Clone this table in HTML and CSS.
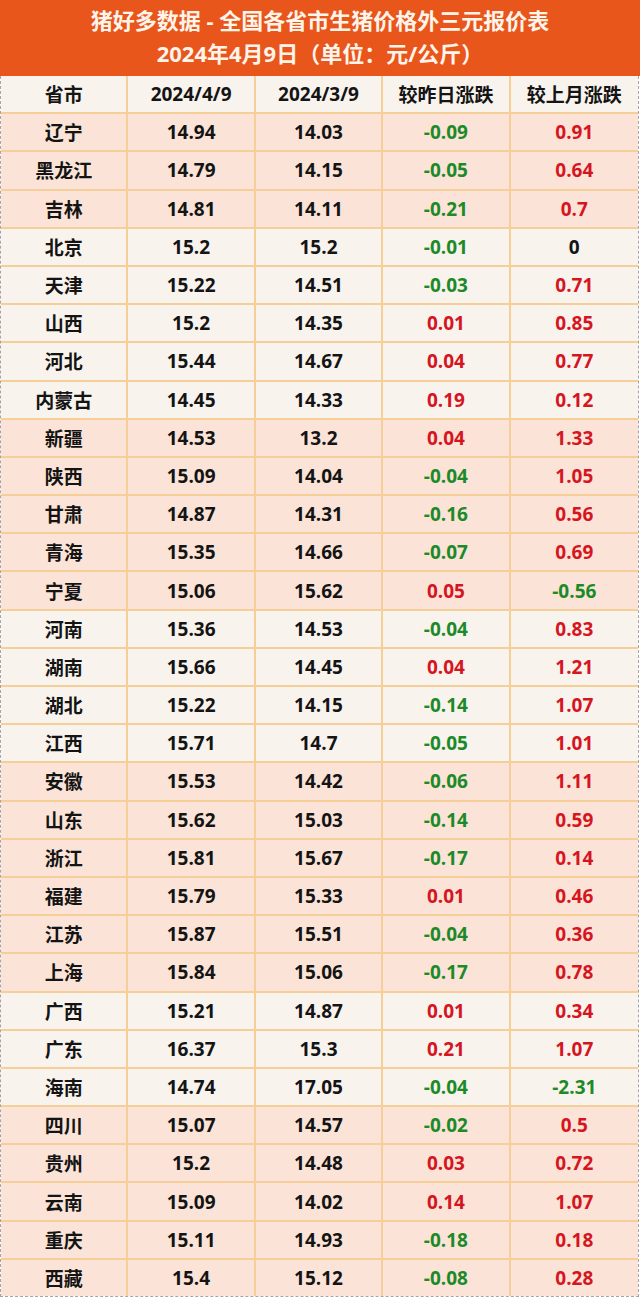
FILE: index.html
```html
<!DOCTYPE html>
<html lang="zh-CN">
<head>
<meta charset="utf-8">
<title>全国各省市生猪价格外三元报价表</title>
<link rel="stylesheet" href="styles.css">
</head>
<body>
<div class="page">
  <div class="title">
    <div>猪好多数据 - 全国各省市生猪价格外三元报价表</div>
    <div>2024年4月9日（单位：元/公斤）</div>
  </div>
  <div class="sheet">
    <div class="row light head"><div>省市</div><div>2024/4/9</div><div>2024/3/9</div><div>较昨日涨跌</div><div>较上月涨跌</div></div>
    <div class="row pink"><div>辽宁</div><div>14.94</div><div>14.03</div><div class="dn">-0.09</div><div class="up">0.91</div></div>
    <div class="row pink"><div>黑龙江</div><div>14.79</div><div>14.15</div><div class="dn">-0.05</div><div class="up">0.64</div></div>
    <div class="row pink"><div>吉林</div><div>14.81</div><div>14.11</div><div class="dn">-0.21</div><div class="up">0.7</div></div>
    <div class="row light"><div>北京</div><div>15.2</div><div>15.2</div><div class="dn">-0.01</div><div>0</div></div>
    <div class="row light"><div>天津</div><div>15.22</div><div>14.51</div><div class="dn">-0.03</div><div class="up">0.71</div></div>
    <div class="row light"><div>山西</div><div>15.2</div><div>14.35</div><div class="up">0.01</div><div class="up">0.85</div></div>
    <div class="row light"><div>河北</div><div>15.44</div><div>14.67</div><div class="up">0.04</div><div class="up">0.77</div></div>
    <div class="row light"><div>内蒙古</div><div>14.45</div><div>14.33</div><div class="up">0.19</div><div class="up">0.12</div></div>
    <div class="row pink"><div>新疆</div><div>14.53</div><div>13.2</div><div class="up">0.04</div><div class="up">1.33</div></div>
    <div class="row pink"><div>陕西</div><div>15.09</div><div>14.04</div><div class="dn">-0.04</div><div class="up">1.05</div></div>
    <div class="row pink"><div>甘肃</div><div>14.87</div><div>14.31</div><div class="dn">-0.16</div><div class="up">0.56</div></div>
    <div class="row pink"><div>青海</div><div>15.35</div><div>14.66</div><div class="dn">-0.07</div><div class="up">0.69</div></div>
    <div class="row pink"><div>宁夏</div><div>15.06</div><div>15.62</div><div class="up">0.05</div><div class="dn">-0.56</div></div>
    <div class="row light"><div>河南</div><div>15.36</div><div>14.53</div><div class="dn">-0.04</div><div class="up">0.83</div></div>
    <div class="row light"><div>湖南</div><div>15.66</div><div>14.45</div><div class="up">0.04</div><div class="up">1.21</div></div>
    <div class="row light"><div>湖北</div><div>15.22</div><div>14.15</div><div class="dn">-0.14</div><div class="up">1.07</div></div>
    <div class="row light"><div>江西</div><div>15.71</div><div>14.7</div><div class="dn">-0.05</div><div class="up">1.01</div></div>
    <div class="row pink"><div>安徽</div><div>15.53</div><div>14.42</div><div class="dn">-0.06</div><div class="up">1.11</div></div>
    <div class="row pink"><div>山东</div><div>15.62</div><div>15.03</div><div class="dn">-0.14</div><div class="up">0.59</div></div>
    <div class="row pink"><div>浙江</div><div>15.81</div><div>15.67</div><div class="dn">-0.17</div><div class="up">0.14</div></div>
    <div class="row pink"><div>福建</div><div>15.79</div><div>15.33</div><div class="up">0.01</div><div class="up">0.46</div></div>
    <div class="row pink"><div>江苏</div><div>15.87</div><div>15.51</div><div class="dn">-0.04</div><div class="up">0.36</div></div>
    <div class="row pink"><div>上海</div><div>15.84</div><div>15.06</div><div class="dn">-0.17</div><div class="up">0.78</div></div>
    <div class="row light"><div>广西</div><div>15.21</div><div>14.87</div><div class="up">0.01</div><div class="up">0.34</div></div>
    <div class="row light"><div>广东</div><div>16.37</div><div>15.3</div><div class="up">0.21</div><div class="up">1.07</div></div>
    <div class="row light"><div>海南</div><div>14.74</div><div>17.05</div><div class="dn">-0.04</div><div class="dn">-2.31</div></div>
    <div class="row pink"><div>四川</div><div>15.07</div><div>14.57</div><div class="dn">-0.02</div><div class="up">0.5</div></div>
    <div class="row pink"><div>贵州</div><div>15.2</div><div>14.48</div><div class="up">0.03</div><div class="up">0.72</div></div>
    <div class="row pink"><div>云南</div><div>15.09</div><div>14.02</div><div class="up">0.14</div><div class="up">1.07</div></div>
    <div class="row pink"><div>重庆</div><div>15.11</div><div>14.93</div><div class="dn">-0.18</div><div class="up">0.18</div></div>
    <div class="row pink"><div>西藏</div><div>15.4</div><div>15.12</div><div class="dn">-0.08</div><div class="up">0.28</div></div>
  </div>
</div>
</body>
</html>
```
FILE: styles.css
```css
html, body {
  margin: 0;
  padding: 0;
  background: #ffffff;
}

.page {
  width: 640px;
  height: 1299px;
  display: flex;
  flex-direction: column;
  font-family: "Open Sans", "Noto Sans CJK SC", sans-serif;
  font-weight: 700;
}

.title {
  height: 76px;
  box-sizing: border-box;
  padding: 4px 0 6px;
  background: #e8561c;
  color: #fff4ea;
  font-size: 22px;
  line-height: 33px;
  text-align: center;
}

.sheet {
  flex: 1;
  display: flex;
  flex-direction: column;
  border-left: 1px dashed #a9a4a2;
  border-right: 1px dashed #a9a4a2;
  border-bottom: 1px dashed #a9a4a2;
  margin-right: 1px;
  margin-bottom: 2px;
}

.row {
  flex: 1;
  display: grid;
  grid-template-columns: repeat(5, 1fr);
  border-bottom: 2px solid #f6cf98;
}

.row:last-child {
  border-bottom: none;
}

.row > div {
  display: flex;
  align-items: center;
  justify-content: center;
  font-size: 19px;
  color: #141414;
  border-right: 2px solid #f6cf98;
}

.row > div:last-child {
  border-right: none;
}

.pink {
  background: #fbe4d7;
}

.light {
  background: #f9f3ee;
}

.row > .up {
  color: #d5151f;
}

.row > .dn {
  color: #1c8a27;
}
```
